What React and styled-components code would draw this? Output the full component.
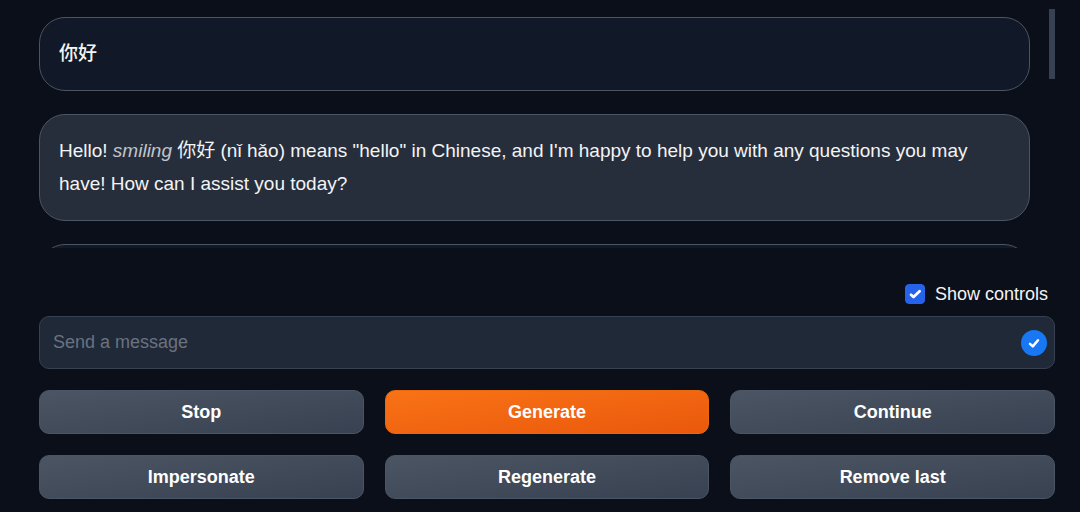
import React, { useState } from 'react';
import styled, { createGlobalStyle, css } from 'styled-components';

const GlobalStyle = createGlobalStyle`
  * {
    box-sizing: border-box;
  }

  body {
    margin: 0;
    background: #0b0f19;
    color: #f3f4f6;
    font-family: 'Liberation Sans', 'Noto Sans CJK SC', sans-serif;
    font-size: 18px;
  }

  button,
  input {
    font: inherit;
  }
`;

const Page = styled.main`
  display: flex;
  flex-direction: column;
  height: 100vh;
  padding: 0 25px 13px 39px;
`;

const ChatArea = styled.section`
  display: flex;
  flex: 1;
  gap: 19px;
  min-height: 0;
  overflow: hidden;
`;

const Messages = styled.div`
  display: flex;
  flex-direction: column;
  flex: 1;
  gap: 23px;
  padding-top: 17px;
`;

const Message = styled.div`
  flex-shrink: 0;
  min-height: 74px;
  padding: 19px 19px 20px;
  border: 1px solid #4b5563;
  border-radius: 26px;
  background: ${({ $bot }) => ($bot ? '#272e3b' : '#111827')};
  font-size: 19px;
  font-weight: ${({ $bot }) => ($bot ? 400 : 500)};
  line-height: 33px;

  p {
    margin: 0;
  }

  em {
    color: #c1c5cc;
  }
`;

const ScrollTrack = styled.div`
  width: 6px;
  padding-top: 9px;
`;

const ScrollThumb = styled.div`
  height: 70px;
  background: #374151;
`;

const ControlsToggle = styled.label`
  display: flex;
  align-items: center;
  align-self: flex-end;
  gap: 10px;
  margin: 36px 7px 12px 0;
  line-height: 20px;
`;

const CheckWrap = styled.span`
  display: grid;
  width: 20px;
  height: 20px;

  > * {
    grid-area: 1 / 1;
  }

  svg {
    width: 20px;
    height: 20px;
    pointer-events: none;
  }
`;

const Checkbox = styled.input`
  appearance: none;
  width: 20px;
  height: 20px;
  margin: 0;
  border: 1px solid #374151;
  border-radius: 4px;
  background: #1f2937;

  &:checked {
    border-color: #2563eb;
    background: #2563eb;
  }
`;

const Composer = styled.form`
  display: flex;
  align-items: center;
  height: 53px;
  margin-bottom: 21px;
  padding: 0 7px 0 13px;
  border: 1px solid #374151;
  border-radius: 10px;
  background: #1f2937;
`;

const MessageInput = styled.input`
  flex: 1;
  min-width: 0;
  padding: 0;
  border: 0;
  outline: 0;
  background: transparent;
  color: #f3f4f6;

  &::placeholder {
    color: #6b7280;
    opacity: 1;
  }
`;

const SendButton = styled.button`
  display: flex;
  width: 26px;
  height: 26px;
  padding: 0;
  border: 0;
  border-radius: 50%;
  background: #1877f2;
  cursor: pointer;

  svg {
    width: 26px;
    height: 26px;
  }
`;

const ButtonGrid = styled.div`
  display: grid;
  grid-template-columns: repeat(3, 1fr);
  gap: 21px;
`;

const ActionButton = styled.button`
  height: 44px;
  padding: 0;
  border: 1px solid #4b5563;
  border-radius: 10px;
  background: linear-gradient(to bottom right, #4b5563, #374151) border-box;
  color: #fff;
  font-weight: 700;
  cursor: pointer;

  ${({ $primary }) =>
    $primary &&
    css`
      border-color: #ea680c;
      background: linear-gradient(to bottom right, #f97316, #ea580c) border-box;
    `}
`;

const actions = ['Stop', 'Generate', 'Continue', 'Impersonate', 'Regenerate', 'Remove last'];

function Tick({ size, d, width }) {
  return (
    <svg viewBox={`0 0 ${size} ${size}`} fill="none" stroke="#fff" strokeWidth={width} strokeLinecap="round" strokeLinejoin="round" aria-hidden="true">
      <path d={d} />
    </svg>
  );
}

function App() {
  const [showControls, setShowControls] = useState(true);

  return (
    <>
      <GlobalStyle />
      <Page>
        <ChatArea>
          <Messages>
            <Message>
              <p>你好</p>
            </Message>
            <Message $bot>
              <p>
                Hello! <em>smiling</em> 你好 (nǐ hǎo) means "hello" in Chinese, and I'm happy to help you with any
                questions you may have! How can I assist you today?
              </p>
            </Message>
            <Message />
          </Messages>
          <ScrollTrack>
            <ScrollThumb />
          </ScrollTrack>
        </ChatArea>

        <ControlsToggle>
          <CheckWrap>
            <Checkbox
              type="checkbox"
              checked={showControls}
              onChange={(e) => setShowControls(e.target.checked)}
            />
            {showControls && <Tick size={20} width={2.8} d="M6 10.8 L8.5 13 L14.6 7.2" />}
          </CheckWrap>
          Show controls
        </ControlsToggle>

        <Composer onSubmit={(e) => e.preventDefault()}>
          <MessageInput type="text" placeholder="Send a message" aria-label="Send a message" />
          <SendButton type="submit" aria-label="Send">
            <Tick size={26} width={2.5} d="M9 13.8 L11.8 16.4 L17 10.2" />
          </SendButton>
        </Composer>

        {showControls && (
          <ButtonGrid>
            {actions.map((label) => (
              <ActionButton key={label} type="button" $primary={label === 'Generate'}>
                {label}
              </ActionButton>
            ))}
          </ButtonGrid>
        )}
      </Page>
    </>
  );
}

export default App;
